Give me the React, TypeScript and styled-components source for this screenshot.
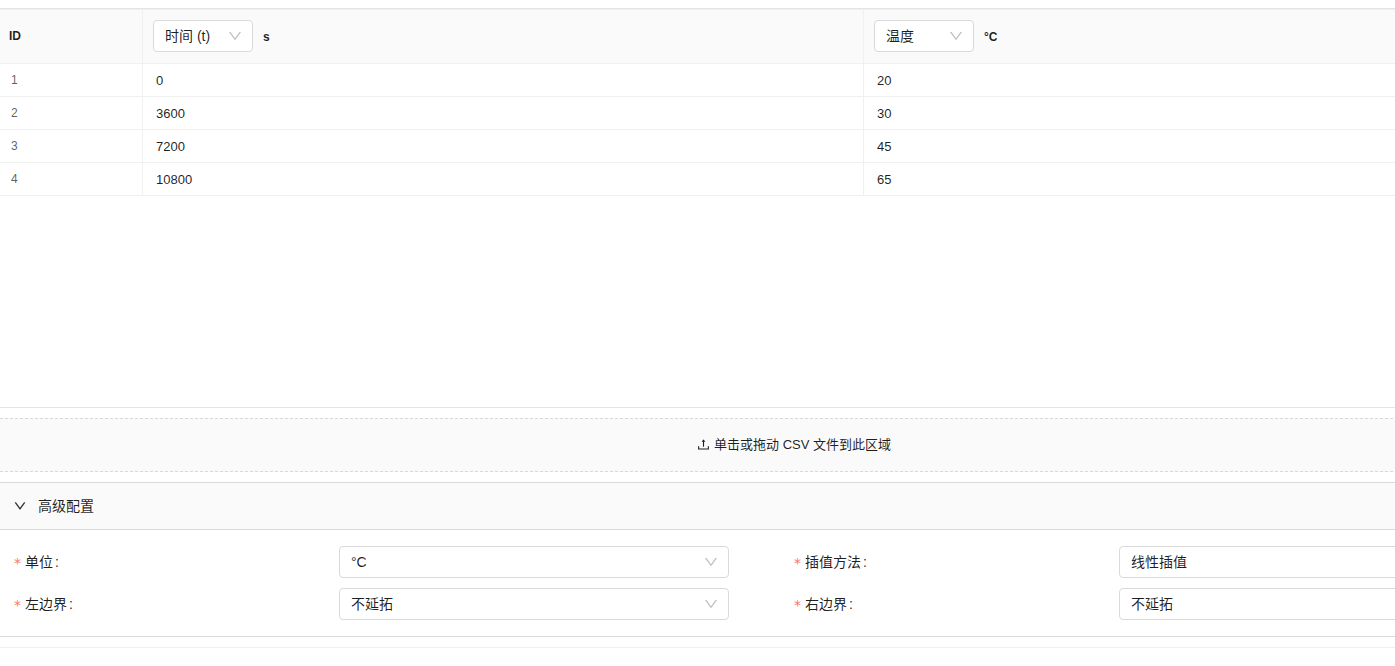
import React, { useId } from "react";
import styled, { createGlobalStyle } from "styled-components";

const GlobalStyle = createGlobalStyle`
  *, *::before, *::after { box-sizing: border-box; }
  body {
    margin: 0;
    background: #fff;
    color: rgba(0, 0, 0, 0.88);
    font-family: "Liberation Sans", "Noto Sans CJK SC", sans-serif;
    font-size: 14px;
    line-height: 22px;
  }
  button, select { font: inherit; color: inherit; }
`;

const Viewport = styled.main`
  overflow: hidden;
`;

/* The editor is wider than its window; what runs past the right edge is clipped. */
const Editor = styled.div`
  display: flex;
  flex-direction: column;
  gap: 10px;
  margin-right: -193px;
  padding: 8px 0 10px;
  border-bottom: 1px solid #f0f0f0;
`;

const TableFrame = styled.section`
  min-height: 400px;
  padding-right: 3px;
  border-top: 1px solid #e4e4e4;
  border-bottom: 1px solid #e4e4e4;
`;

const DataTable = styled.table`
  width: 100%;
  table-layout: fixed;
  border-collapse: separate;
  border-spacing: 0;
  border-top: 1px solid #f0f0f0;
`;

const IdColumn = styled.col`
  width: 143px;
`;

const HeadCell = styled.th<{ $plain?: boolean }>`
  height: 54px;
  padding: ${(p) => (p.$plain ? "0 9px 2px" : "0 10px 2px")};
  background: #fafafa;
  border-right: 1px solid #f0f0f0;
  border-bottom: 1px solid #f0f0f0;
  font-size: 12px;
  font-weight: 700;
  text-align: left;
`;

const HeadContent = styled.div`
  display: flex;
  align-items: center;
  gap: 10px;
`;

const Unit = styled.span`
  padding-top: 2px;
`;

const IdCell = styled.td`
  height: 33px;
  padding: 0 11px;
  border-right: 1px solid #f0f0f0;
  border-bottom: 1px solid #f0f0f0;
  color: rgba(0, 0, 0, 0.65);
  font-size: 12px;
`;

const ValueCell = styled(IdCell)`
  padding: 2px 13px 0;
  color: rgba(0, 0, 0, 0.88);
  font-size: 13px;
`;

const SelectBox = styled.span<{ $width: string }>`
  position: relative;
  display: block;
  width: ${(p) => p.$width};
`;

const NativeSelect = styled.select`
  appearance: none;
  display: block;
  width: 100%;
  height: 32px;
  margin: 0;
  padding: 0 29px 0 11px;
  border: 1px solid #d9d9d9;
  border-radius: 4px;
  outline: none;
  background: #fff;
  font-size: 14px;
  font-weight: 400;
  cursor: pointer;
`;

const SelectArrow = styled.svg`
  position: absolute;
  top: 9px;
  right: 11px;
  width: 14px;
  height: 14px;
  fill: rgba(0, 0, 0, 0.25);
  pointer-events: none;
`;

const UploadArea = styled.button`
  display: flex;
  align-items: center;
  justify-content: center;
  gap: 4px;
  width: 100%;
  height: 54px;
  padding: 0;
  border: 1px dashed #d9d9d9;
  border-width: 1px 0;
  background: #fafafa;
  font-size: 13px;
  cursor: pointer;
`;

const UploadIcon = styled.svg`
  width: 13px;
  height: 13px;
  margin-bottom: 2px;
  fill: currentColor;
`;

const Collapse = styled.section`
  border-top: 1px solid #d9d9d9;
  border-bottom: 1px solid #d9d9d9;
`;

const CollapseHeader = styled.button`
  display: flex;
  align-items: center;
  gap: 12px;
  width: 100%;
  height: 47px;
  padding: 0 14px;
  border: 0;
  border-bottom: 1px solid #d9d9d9;
  background: #fafafa;
  text-align: left;
  cursor: pointer;
`;

const CollapseArrow = styled.svg`
  width: 12px;
  height: 12px;
  fill: currentColor;
  stroke: currentColor;
  stroke-width: 16;
`;

const ConfigForm = styled.form`
  display: grid;
  grid-template-columns: 1fr 1fr;
  row-gap: 10px;
  padding: 16px 14px;
`;

const FormItem = styled.div`
  display: grid;
  grid-template-columns: 5fr 6fr 1fr;
  align-items: center;
`;

const FormLabel = styled.label`
  display: flex;
  align-items: center;

  &::after {
    content: ":";
    margin-left: 2px;
  }
`;

const Required = styled.span`
  margin-right: 4px;
  padding-top: 2px;
  color: #ff7072;
  font-family: "DejaVu Sans", sans-serif;
  line-height: 14px;
`;

const DOWN_PATH =
  "M884 256h-75c-5.1 0-9.9 2.5-12.9 6.6L512 654.2 227.9 262.6c-3-4.1-7.8-6.6-12.9-6.6h-75c-6.5 0-10.3 7.4-6.5 12.7l352.6 486.1c12.8 17.6 39 17.6 51.7 0l352.6-486.1c3.9-5.3.1-12.7-6.4-12.7z";
const UPLOAD_PATH =
  "M400 317.7h73.9V656c0 4.4 3.6 8 8 8h60c4.4 0 8-3.6 8-8V317.7H624c6.7 0 10.4-7.7 6.3-12.9L518.3 163a8 8 0 0 0-12.6 0l-112 141.7c-4.1 5.3-.4 13 6.3 13zM878 626h-60c-4.4 0-8 3.6-8 8v154H214V634c0-4.4-3.6-8-8-8h-60c-4.4 0-8 3.6-8 8v198c0 17.7 14.3 32 32 32h684c17.7 0 32-14.3 32-32V634c0-4.4-3.6-8-8-8z";
const ICON_BOX = "64 64 896 896";

interface SelectProps {
  value: string;
  width?: string;
  id?: string;
  label?: string;
}

function Select({ value, width = "100%", id, label }: SelectProps) {
  return (
    <SelectBox $width={width}>
      <NativeSelect id={id} aria-label={label} defaultValue={value}>
        <option>{value}</option>
      </NativeSelect>
      <SelectArrow viewBox={ICON_BOX} aria-hidden="true">
        <path d={DOWN_PATH} />
      </SelectArrow>
    </SelectBox>
  );
}

function Field({ label, value }: { label: string; value: string }) {
  const id = useId();
  return (
    <FormItem>
      <FormLabel htmlFor={id}>
        <Required>*</Required>
        {label}
      </FormLabel>
      <Select id={id} value={value} />
    </FormItem>
  );
}

const columns = [
  { name: "时间 (t)", unit: "s" },
  { name: "温度", unit: "°C" },
];

const rows = [
  [0, 20],
  [3600, 30],
  [7200, 45],
  [10800, 65],
];

const fields = [
  { label: "单位", value: "°C" },
  { label: "插值方法", value: "线性插值" },
  { label: "左边界", value: "不延拓" },
  { label: "右边界", value: "不延拓" },
];

export default function App() {
  return (
    <Viewport>
      <GlobalStyle />
      <Editor>
        <TableFrame>
          <DataTable>
            <colgroup>
              <IdColumn />
              <col />
              <col />
            </colgroup>
            <thead>
              <tr>
                <HeadCell $plain>ID</HeadCell>
                {columns.map((c) => (
                  <HeadCell key={c.name}>
                    <HeadContent>
                      <Select value={c.name} width="100px" label={c.name} />
                      <Unit>{c.unit}</Unit>
                    </HeadContent>
                  </HeadCell>
                ))}
              </tr>
            </thead>
            <tbody>
              {rows.map((row, i) => (
                <tr key={i}>
                  <IdCell>{i + 1}</IdCell>
                  {row.map((v, j) => (
                    <ValueCell key={j}>{v}</ValueCell>
                  ))}
                </tr>
              ))}
            </tbody>
          </DataTable>
        </TableFrame>

        <UploadArea type="button">
          <UploadIcon viewBox={ICON_BOX} aria-hidden="true">
            <path d={UPLOAD_PATH} />
          </UploadIcon>
          单击或拖动 CSV 文件到此区域
        </UploadArea>

        <Collapse>
          <CollapseHeader type="button" aria-expanded="true">
            <CollapseArrow viewBox={ICON_BOX} aria-hidden="true">
              <path d={DOWN_PATH} />
            </CollapseArrow>
            高级配置
          </CollapseHeader>
          <ConfigForm>
            {fields.map((f) => (
              <Field key={f.label} label={f.label} value={f.value} />
            ))}
          </ConfigForm>
        </Collapse>
      </Editor>
    </Viewport>
  );
}
